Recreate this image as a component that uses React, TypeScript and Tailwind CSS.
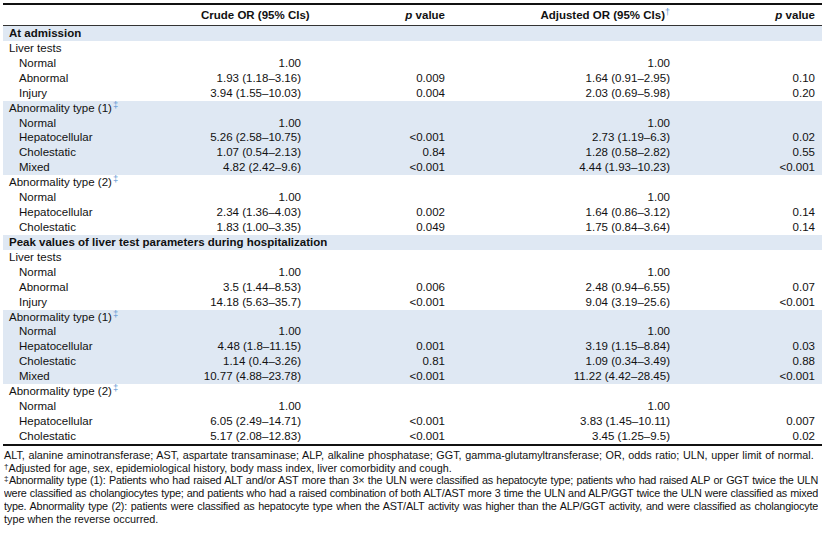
import React from "react";

type Row = {
  label: string;
  kind: "section" | "group" | "item";
  sup?: string;
  crude?: string;
  p1?: string;
  adj?: string;
  p2?: string;
  band?: boolean;
};

const rows: Row[] = [
  { label: "At admission", kind: "section", band: true },
  { label: "Liver tests", kind: "group" },
  { label: "Normal", kind: "item", crude: "1.00", adj: "1.00" },
  { label: "Abnormal", kind: "item", crude: "1.93 (1.18–3.16)", p1: "0.009", adj: "1.64 (0.91–2.95)", p2: "0.10" },
  { label: "Injury", kind: "item", crude: "3.94 (1.55–10.03)", p1: "0.004", adj: "2.03 (0.69–5.98)", p2: "0.20" },
  { label: "Abnormality type (1)", kind: "group", sup: "‡", band: true },
  { label: "Normal", kind: "item", crude: "1.00", adj: "1.00", band: true },
  { label: "Hepatocellular", kind: "item", crude: "5.26 (2.58–10.75)", p1: "<0.001", adj: "2.73 (1.19–6.3)", p2: "0.02", band: true },
  { label: "Cholestatic", kind: "item", crude: "1.07 (0.54–2.13)", p1: "0.84", adj: "1.28 (0.58–2.82)", p2: "0.55", band: true },
  { label: "Mixed", kind: "item", crude: "4.82 (2.42–9.6)", p1: "<0.001", adj: "4.44 (1.93–10.23)", p2: "<0.001", band: true },
  { label: "Abnormality type (2)", kind: "group", sup: "‡" },
  { label: "Normal", kind: "item", crude: "1.00", adj: "1.00" },
  { label: "Hepatocellular", kind: "item", crude: "2.34 (1.36–4.03)", p1: "0.002", adj: "1.64 (0.86–3.12)", p2: "0.14" },
  { label: "Cholestatic", kind: "item", crude: "1.83 (1.00–3.35)", p1: "0.049", adj: "1.75 (0.84–3.64)", p2: "0.14" },
  { label: "Peak values of liver test parameters during hospitalization", kind: "section", band: true },
  { label: "Liver tests", kind: "group" },
  { label: "Normal", kind: "item", crude: "1.00", adj: "1.00" },
  { label: "Abnormal", kind: "item", crude: "3.5 (1.44–8.53)", p1: "0.006", adj: "2.48 (0.94–6.55)", p2: "0.07" },
  { label: "Injury", kind: "item", crude: "14.18 (5.63–35.7)", p1: "<0.001", adj: "9.04 (3.19–25.6)", p2: "<0.001" },
  { label: "Abnormality type (1)", kind: "group", sup: "‡", band: true },
  { label: "Normal", kind: "item", crude: "1.00", adj: "1.00", band: true },
  { label: "Hepatocellular", kind: "item", crude: "4.48 (1.8–11.15)", p1: "0.001", adj: "3.19 (1.15–8.84)", p2: "0.03", band: true },
  { label: "Cholestatic", kind: "item", crude: "1.14 (0.4–3.26)", p1: "0.81", adj: "1.09 (0.34–3.49)", p2: "0.88", band: true },
  { label: "Mixed", kind: "item", crude: "10.77 (4.88–23.78)", p1: "<0.001", adj: "11.22 (4.42–28.45)", p2: "<0.001", band: true },
  { label: "Abnormality type (2)", kind: "group", sup: "‡" },
  { label: "Normal", kind: "item", crude: "1.00", adj: "1.00" },
  { label: "Hepatocellular", kind: "item", crude: "6.05 (2.49–14.71)", p1: "<0.001", adj: "3.83 (1.45–10.11)", p2: "0.007" },
  { label: "Cholestatic", kind: "item", crude: "5.17 (2.08–12.83)", p1: "<0.001", adj: "3.45 (1.25–9.5)", p2: "0.02" },
];

const grid = "grid grid-cols-[198px_100px_144px_225px_145px_7px]";

function TableRow({ r }: { r: Row }) {
  const bg = r.band ? "bg-[#dfe8f3]" : "";
  return (
    <div className={`${grid} h-[14.93px] items-center leading-[14.93px] ${bg}`}>
      <div
        className={`whitespace-nowrap ${
          r.kind === "item" ? "pl-4" : "pl-[6px]"
        } ${r.kind === "section" ? "font-bold col-span-6" : ""}`}
      >
        {r.label}
        {r.sup && (
          <span className="text-[9.5px] text-[#5f97d3] relative -top-[4px] leading-none ml-[1px]">{r.sup}</span>
        )}
      </div>
      {r.kind !== "section" && (
        <>
          <div className="text-right whitespace-nowrap">{r.crude ?? ""}</div>
          <div className="text-right whitespace-nowrap">{r.p1 ?? ""}</div>
          <div className="text-right whitespace-nowrap">{r.adj ?? ""}</div>
          <div className="text-right whitespace-nowrap">{r.p2 ?? ""}</div>
          <div />
        </>
      )}
    </div>
  );
}

export default function App() {
  return (
    <div className="w-[826px] h-[535px] bg-white text-[#111] font-['Liberation_Sans',Arial,sans-serif] overflow-hidden">
      <div className="pl-[3px] pt-[3px] w-[822px]">
        <div className="h-[2px] bg-[#111]" />
        <div className={`${grid} h-[21px] pt-[1px] items-center text-[11.5px] font-bold border-b border-[#333]`}>
          <div />
          <div className="text-right whitespace-nowrap">Crude OR (95% CIs)</div>
          <div className="text-right whitespace-nowrap">
            <i>p</i> value
          </div>
          <div className="text-right whitespace-nowrap">
            Adjusted OR (95% CIs)
            <span className="text-[9px] text-[#5f97d3] font-normal relative -top-[4px] leading-none">†</span>
          </div>
          <div className="text-right whitespace-nowrap">
            <i>p</i> value
          </div>
          <div />
        </div>
        <div className="text-[11.5px]">
          {rows.map((r, i) => (
            <TableRow key={i} r={r} />
          ))}
        </div>
        <div className="h-[2px] bg-[#111]" />
      </div>
      <div className="w-[822px] pl-[4px] pr-[4px] pt-[3px] text-[10.8px] leading-[12.8px] text-[#111]">
        <div className="whitespace-nowrap [word-spacing:0.6px]">
          ALT, alanine aminotransferase; AST, aspartate transaminase; ALP, alkaline phosphatase; GGT, gamma-glutamyltransferase; OR, odds ratio; ULN, upper limit of normal.
        </div>
        <div className="whitespace-nowrap">
          <span className="text-[8px] relative -top-[3px] leading-none">†</span>Adjusted for age, sex, epidemiological history, body mass index, liver comorbidity and cough.
        </div>
        <div className="text-justify [text-align-last:justify] tracking-[-0.2px] overflow-hidden h-[12.8px]">
          <span className="text-[8px] relative -top-[3px] leading-none">‡</span>Abnormality type (1): Patients who had raised ALT and/or AST more than 3× the ULN were classified as hepatocyte type; patients who had raised ALP or GGT twice the ULN
        </div>
        <div className="text-justify [text-align-last:justify] tracking-[-0.2px] overflow-hidden h-[12.8px]">
          were classified as cholangiocytes type; and patients who had a raised combination of both ALT/AST more 3 time the ULN and ALP/GGT twice the ULN were classified as mixed
        </div>
        <div className="text-justify [text-align-last:justify] tracking-[-0.2px] overflow-hidden h-[12.8px]">
          type. Abnormality type (2): patients were classified as hepatocyte type when the AST/ALT activity was higher than the ALP/GGT activity, and were classified as cholangiocyte
        </div>
        <div className="whitespace-nowrap">type when the reverse occurred.</div>
      </div>
    </div>
  );
}
